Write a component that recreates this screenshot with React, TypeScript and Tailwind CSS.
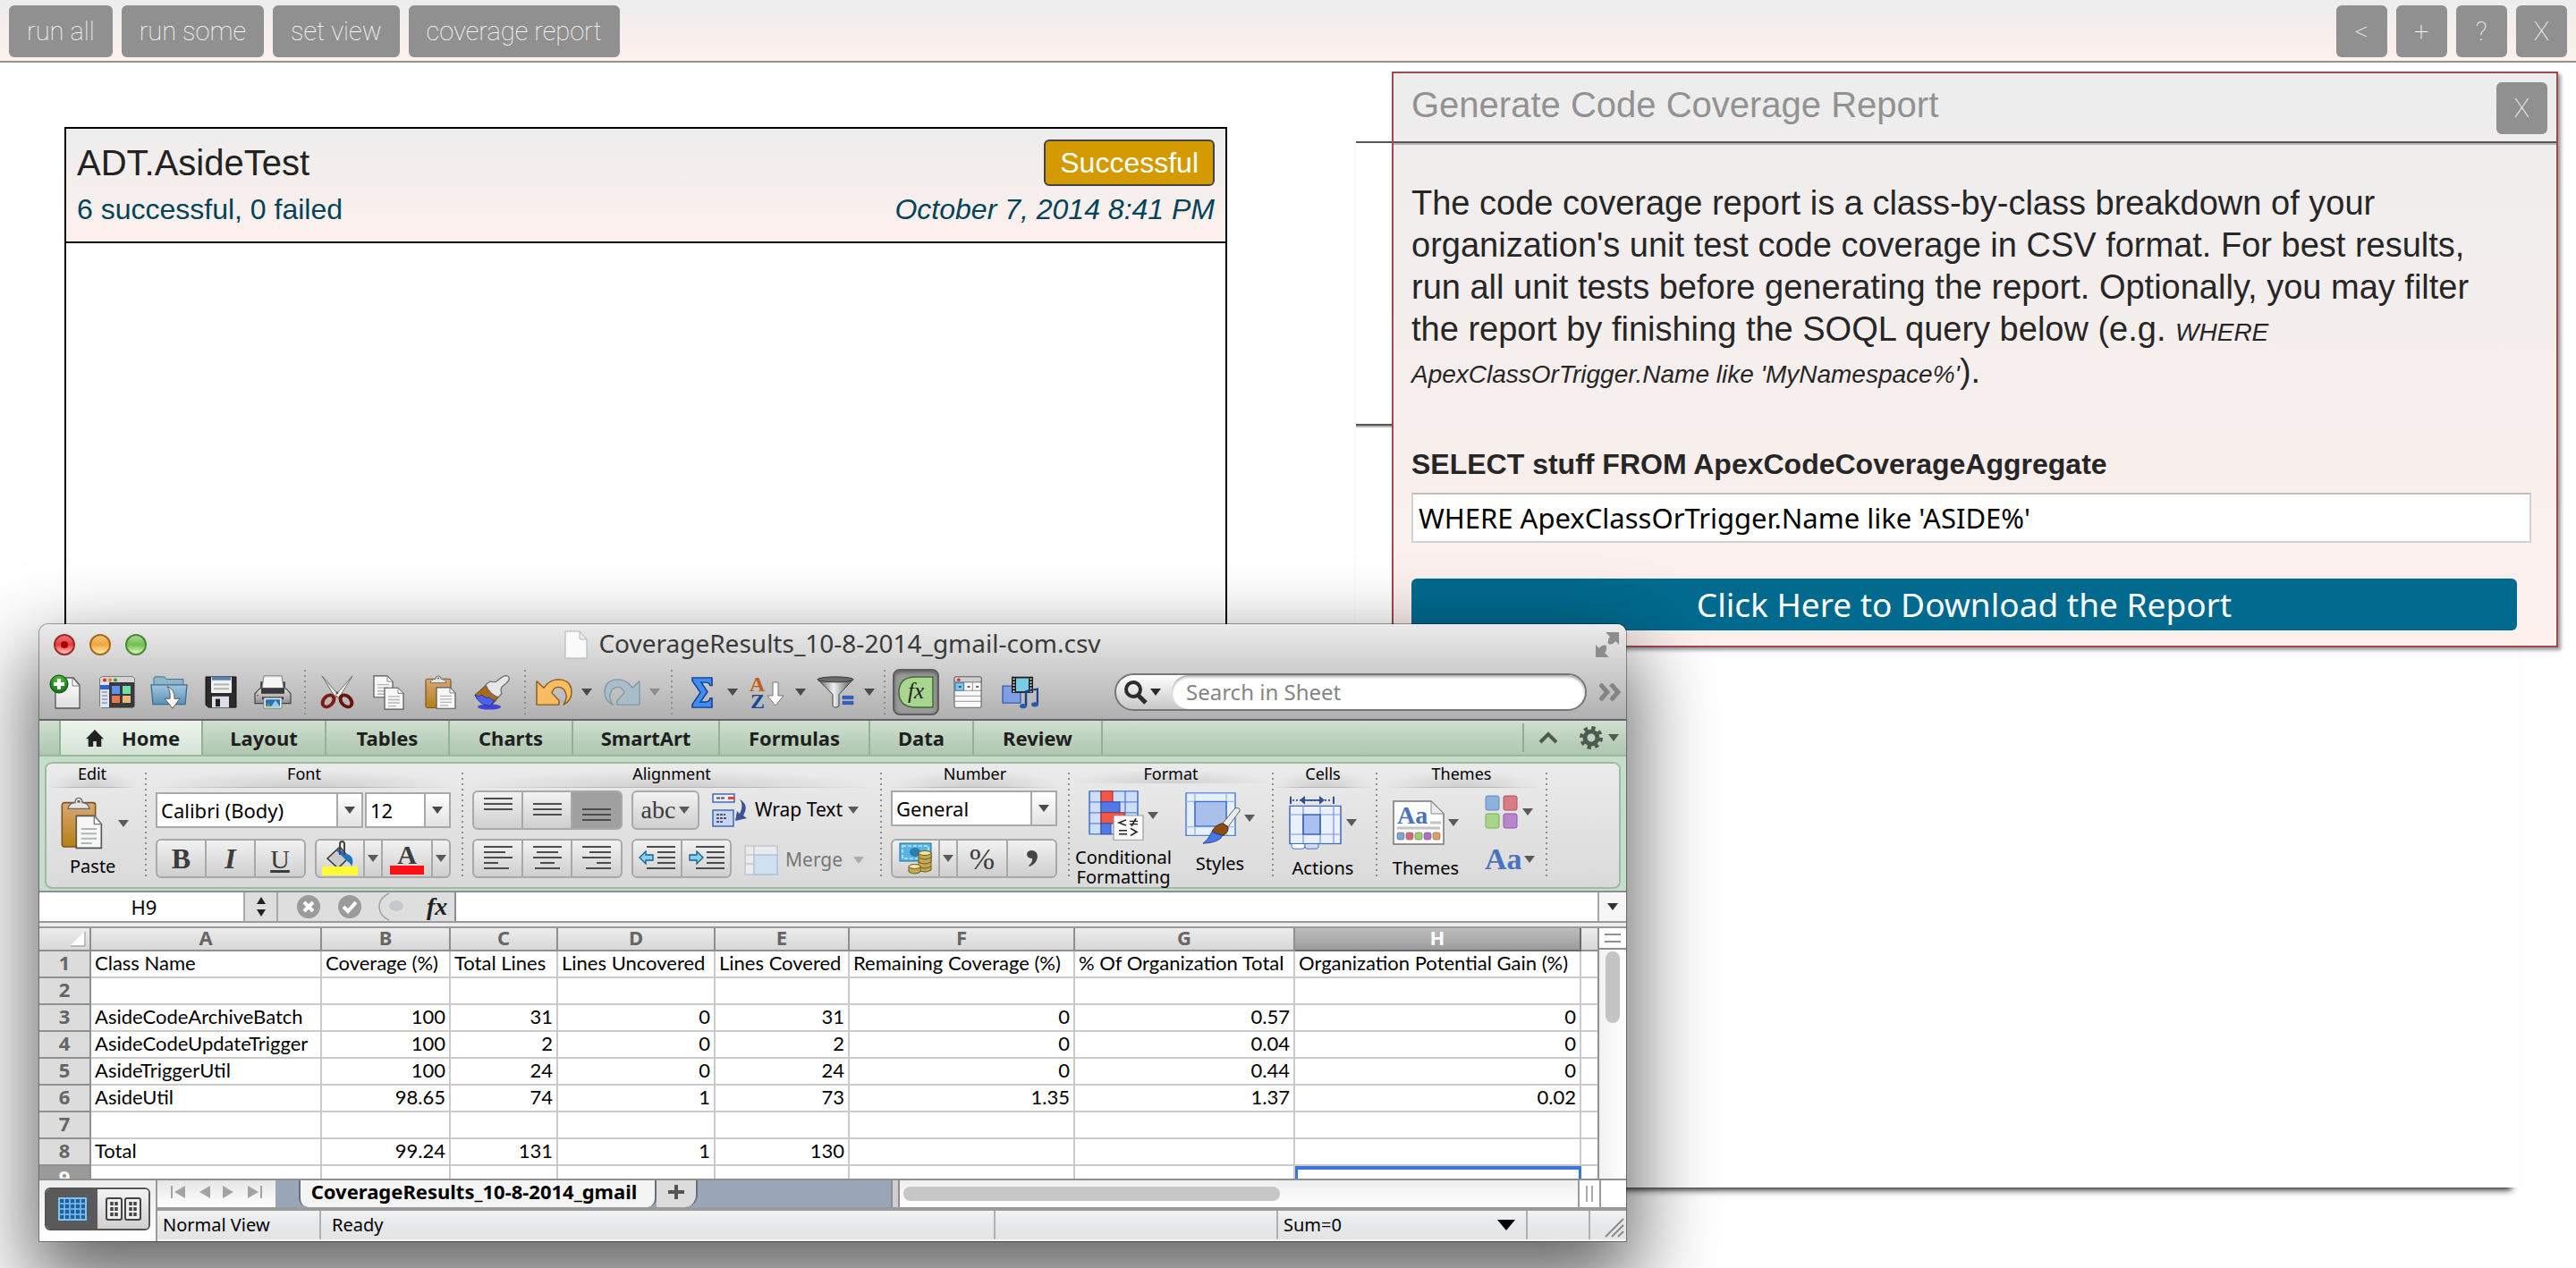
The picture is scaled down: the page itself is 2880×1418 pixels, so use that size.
import React from "react";
import type { ReactNode } from "react";

const ui = "font-['Noto_Sans','Open_Sans',sans-serif]";

/* ---------- small shared pieces ---------- */

function Caret({ className = "text-[#4a4a4a]" }: { className?: string }) {
  return (
    <svg width="12" height="8" viewBox="0 0 12 8" className={`shrink-0 ${className}`} aria-hidden="true">
      <path d="M0 0h12L6 8z" fill="currentColor" />
    </svg>
  );
}

function NavButton({ children, label }: { children: ReactNode; label?: string }) {
  return (
    <button
      type="button"
      aria-label={label}
      className="flex h-[58px] min-w-[57px] items-center justify-center rounded-md bg-[#909090] px-5 font-['Roboto','Inter',sans-serif] text-[29px] leading-[40px] font-thin whitespace-nowrap text-white"
    >
      {children}
    </button>
  );
}

function Tool({ children, label, className }: { children: ReactNode; label: string; className: string }) {
  return (
    <button type="button" aria-label={label} className={`flex h-[52px] shrink-0 items-center justify-center ${className}`}>
      {children}
    </button>
  );
}

function Dots({ className }: { className: string }) {
  return (
    <div className={`flex shrink-0 justify-center ${className}`}>
      <div className="w-[2px] bg-[repeating-linear-gradient(to_bottom,#8f8f8f_0px,#8f8f8f_2px,transparent_2px,transparent_6px)]" />
    </div>
  );
}

/* ---------- toolbar icons ---------- */

function NewDocIcon() {
  return (
    <svg width="36" height="40" viewBox="0 0 36 40" aria-hidden="true">
      <defs>
        <linearGradient id="nd" x1="0" y1="0" x2="0" y2="1"><stop offset="0" stopColor="#fff" /><stop offset="1" stopColor="#dedede" /></linearGradient>
        <radialGradient id="ng" cx=".5" cy=".3" r=".7"><stop offset="0" stopColor="#5cc640" /><stop offset="1" stopColor="#0e6b12" /></radialGradient>
      </defs>
      <path d="M7 4h20l7 8v26H7z" fill="url(#nd)" stroke="#555" strokeWidth="1.300" />
      <path d="M26 4v9h8z" fill="#fff" stroke="#777" strokeWidth="1" />
      <circle cx="11" cy="11" r="10" fill="url(#ng)" stroke="#0a4d0d" />
      <path d="M9 5h4v4h4v4h-4v4H9v-4H5V9h4z" fill="#fff" />
    </svg>
  );
}

function GalleryIcon() {
  return (
    <svg width="40" height="36" viewBox="0 0 40 36" aria-hidden="true">
      <rect x="1" y="1" width="38" height="34" rx="2" fill="#3a3a3c" stroke="#333" />
      <path d="M1 7V3q0-2 2-2h34q2 0 2 2v4z" fill="#d5d5d5" />
      <circle cx="6" cy="4.500" r="2" fill="#d8302b" /><circle cx="12" cy="4.500" r="2" fill="#d98a1c" /><circle cx="18" cy="4.500" r="2" fill="#3d9b2c" />
      <rect x="1" y="7" width="10" height="28" fill="#dfe5f2" />
      <rect x="1" y="10" width="10" height="5" fill="#2f60d8" />
      <path d="M3 18h6M3 22h6M3 26h6M3 30h6" stroke="#a3abbd" strokeWidth="2" />
      <rect x="14" y="11" width="9" height="9" fill="#5b92ee" /><rect x="26" y="11" width="9" height="9" fill="#6fe0ac" />
      <rect x="14" y="22" width="9" height="8" fill="#e8764e" /><rect x="26" y="22" width="9" height="8" fill="#f0b878" />
    </svg>
  );
}

function FolderIcon() {
  return (
    <svg width="42" height="38" viewBox="0 0 42 42" preserveAspectRatio="none" aria-hidden="true">
      <defs>
        <linearGradient id="fo" x1="0" y1="0" x2="0" y2="1"><stop offset="0" stopColor="#a3c6de" /><stop offset="1" stopColor="#5a90b5" /></linearGradient>
      </defs>
      <path d="M4 4q0-2 2-2h9q2 0 3 3h19v10H4z" fill="#8fb5cd" stroke="#44718f" />
      <path d="M1 12h40l-2 24H3z" fill="url(#fo)" stroke="#3d6c8c" strokeWidth="1.300" />
      <path d="M19 14q9 4 8 15h6l-8 12-9-12h6q1-9-3-15z" fill="#f4f4f4" stroke="#555" strokeWidth="1" />
    </svg>
  );
}

function FloppyIcon() {
  return (
    <svg width="38" height="38" viewBox="0 0 38 40" preserveAspectRatio="none" aria-hidden="true">
      <path d="M2 2h34v36H5l-3-3z" fill="#2b2b2d" stroke="#111" />
      <rect x="8" y="2" width="23" height="19" rx="1" fill="#f1f1f1" />
      <rect x="9" y="2" width="21" height="4" fill="#5b7fb2" />
      <path d="M11 11h17M11 16h17" stroke="#b3b3b3" strokeWidth="2" />
      <rect x="9" y="25" width="19" height="13" fill="#dcdfe6" />
      <rect x="13" y="28" width="5" height="9" fill="#222" />
    </svg>
  );
}

function PrinterIcon() {
  return (
    <svg width="42" height="38" viewBox="0 0 42 42" preserveAspectRatio="none" aria-hidden="true">
      <defs>
        <linearGradient id="pr" x1="0" y1="0" x2="0" y2="1"><stop offset="0" stopColor="#e6e6e6" /><stop offset="1" stopColor="#8d8d8d" /></linearGradient>
      </defs>
      <path d="M7 8h28v14H7z" fill="#4a4a4c" />
      <path d="M5 18l4-3h24l4 3 4 5v12H1V23z" fill="url(#pr)" stroke="#444" strokeWidth="1.200" />
      <path d="M11 1h20l2 15H9z" fill="#f5f5f5" stroke="#777" />
      <path d="M8 16h26v7H8z" fill="#39393b" />
      <rect x="9" y="27" width="24" height="3" fill="#2d2d2f" />
      <path d="M11 28h20v13H11z" fill="#fff" stroke="#777" />
      <path d="M13 30h16v9H13z" fill="#2c6fc0" /><path d="M19 39l5-8 5 8z" fill="#8bd0e6" /><path d="M13 39l3-5 3 5z" fill="#57a64a" />
      <circle cx="4" cy="25" r="1" fill="#e33" />
    </svg>
  );
}

function ScissorsIcon() {
  return (
    <svg width="38" height="38" viewBox="0 0 38 42" preserveAspectRatio="none" aria-hidden="true">
      <path d="M2 1l19 24-4 3z" fill="#e9e9e9" stroke="#666" />
      <path d="M36 1L17 25l4 3z" fill="#f5f5f5" stroke="#666" />
      <ellipse cx="9" cy="32" rx="5.500" ry="8" transform="rotate(35 9 32)" fill="none" stroke="#7e1d12" strokeWidth="4" />
      <ellipse cx="29" cy="32" rx="5.500" ry="8" transform="rotate(-35 29 32)" fill="none" stroke="#6a120c" strokeWidth="4" />
      <circle cx="19" cy="22" r="1.500" fill="#555" />
    </svg>
  );
}

function Page({ x, y }: { x: number; y: number }) {
  return (
    <g transform={`translate(${x} ${y})`}>
      <path d="M0 0h15l6 7v20H0z" fill="#f7f7f7" stroke="#555" strokeWidth="1.200" />
      <path d="M15 0v7h6z" fill="#fff" stroke="#777" strokeWidth="1" />
      <path d="M4 11h13M4 15h13M4 19h13M4 23h9" stroke="#b4b4b4" strokeWidth="1.500" />
    </g>
  );
}

function CopyIcon() {
  return (
    <svg width="36" height="39" viewBox="0 0 36 44" preserveAspectRatio="none" aria-hidden="true">
      <Page x={1} y={1} />
      <Page x={13} y={16} />
    </svg>
  );
}

function ClipboardIcon({ big }: { big?: boolean }) {
  return (
    <svg width={big ? 48 : 36} height={big ? 60 : 39} viewBox="0 0 36 45" preserveAspectRatio="none" aria-hidden="true">
      <defs>
        <linearGradient id="cb" x1="0" y1="0" x2="0" y2="1"><stop offset="0" stopColor="#d9a876" /><stop offset="1" stopColor="#b57f14" /></linearGradient>
      </defs>
      <rect x="1" y="5" width="28" height="37" rx="2" fill="url(#cb)" stroke="#7b5723" strokeWidth="1.200" />
      <path d="M6 10q1-5 6-5 0-4 3-4t3 4q5 0 6 5z" fill="#e5e5e5" stroke="#666" />
      <circle cx="15" cy="4" r="1.200" fill="#666" />
      <Page x={13} y={16} />
    </svg>
  );
}

function BrushIcon() {
  return (
    <svg width="42" height="39" viewBox="0 0 42 44" preserveAspectRatio="none" aria-hidden="true">
      <ellipse cx="17" cy="40" rx="13" ry="3.500" fill="#3f45d8" />
      <path d="M14 12q-8 8-13 13 4 11 17 14 6-5 10-13z" fill="#a86b1e" stroke="#5a3a10" />
      <path d="M1 25q5 3 8 0 4 5 8 3 3 4 6 4l-5 7Q5 37 1 25z" fill="#4b62ec" stroke="#26349c" />
      <path d="M13 12l5-4q6 2 8-1l6-5q6-3 7 1t-3 7l-5 5q-2 4 0 8l-4 5q-10-4-14-16z" fill="#e7e7e7" stroke="#666" strokeWidth="1.200" />
    </svg>
  );
}

function UndoIcon({ redo }: { redo?: boolean }) {
  return (
    <svg width="42" height="30" viewBox="0 0 42 32" preserveAspectRatio="none" className={redo ? "-scale-x-100" : ""} aria-hidden="true">
      <path
        d="M1 3l8 8Q15 1 26 1q14 1 14 15 0 10-9 15 4-6 3-12-2-9-9-9-5 0-7 7l8 9v5H1z"
        fill={redo ? "#a9bdc9" : "#f6bd62"}
        stroke={redo ? "#8299a7" : "#8a5a1c"}
        strokeWidth="1.400"
        strokeLinejoin="round"
      />
    </svg>
  );
}

function SigmaIcon() {
  return (
    <svg width="26" height="35" viewBox="0 0 26 40" preserveAspectRatio="none" aria-hidden="true">
      <path d="M2 1h22v10h-2q-1-4-5-4h-5l7 12-8 13h6q4 0 5-5h2v12H2v-4l9-15L2 5z" fill="#3f8df0" stroke="#123c8e" strokeWidth="1.500" />
    </svg>
  );
}

function SortIcon() {
  return (
    <svg width="42" height="38" viewBox="0 0 42 38" aria-hidden="true">
      <text x="1" y="18" fontSize="24" fontWeight="700" fontFamily="Liberation Serif, serif" fill="#c05d16">A</text>
      <text x="2" y="37" fontSize="24" fontWeight="700" fontFamily="Liberation Serif, serif" fill="#1c4996">Z</text>
      <path d="M27 8h6v15h6l-9 11-9-11h6z" fill="#fff" stroke="#777" />
    </svg>
  );
}

function FunnelIcon() {
  return (
    <svg width="42" height="36" viewBox="0 0 42 42" preserveAspectRatio="none" aria-hidden="true">
      <defs>
        <linearGradient id="fu" x1="0" y1="0" x2="1" y2="0"><stop offset="0" stopColor="#555" /><stop offset=".45" stopColor="#eef1f4" /><stop offset="1" stopColor="#4e4e4e" /></linearGradient>
      </defs>
      <path d="M1 4h40L25 24v15q-4 4-7 0V24z" fill="url(#fu)" stroke="#333" />
      <ellipse cx="21" cy="4.500" rx="20" ry="3.500" fill="#6a6a6a" stroke="#333" />
      <path d="M29 26h12v4H29zM29 33h12v4H29z" fill="#2a62c8" stroke="#123c8e" strokeWidth=".5" />
    </svg>
  );
}

function FormulaIcon() {
  return (
    <svg width="40" height="36" viewBox="0 0 40 36" aria-hidden="true">
      <path d="M39 1v34H20Q1 35 1 18T20 1z" fill="#a9d68f" stroke="#3f6b34" strokeWidth="1.500" />
      <text x="11" y="25" fontSize="25" fontStyle="italic" fontFamily="Liberation Serif, serif" fill="#222">fx</text>
    </svg>
  );
}

function FormIcon() {
  return (
    <svg width="33" height="36" viewBox="0 0 34 42" preserveAspectRatio="none" aria-hidden="true">
      <rect x="1" y="1" width="31" height="40" rx="2" fill="#fafafa" stroke="#666" strokeWidth="1.200" />
      <path d="M1 8V3q0-2 2-2h27q2 0 2 2v5z" fill="#cfcfcf" stroke="#666" />
      <circle cx="6" cy="5" r="2" fill="#d8302b" />
      <rect x="2" y="9" width="10" height="10" fill="#7cc8ee" stroke="#2b6f9b" />
      <path d="M1 19h31M1 26h31M1 33h31M22 8v11" stroke="#8b8b8b" />
      <path d="M6 13h3v2H6zM16 13h3v2h-3zM26 13h3v2h-3z" fill="#333" />
    </svg>
  );
}

function MediaIcon() {
  return (
    <svg width="42" height="38" viewBox="0 0 42 44" preserveAspectRatio="none" aria-hidden="true">
      <rect x="2" y="14" width="20" height="22" fill="#7f9ee6" stroke="#2a4fa8" strokeWidth="1.200" />
      <rect x="12" y="2" width="24" height="21" fill="#1b1b1d" />
      <rect x="17" y="4" width="14" height="17" fill="#7ccbe6" />
      <path d="M14.500 4v18M33.500 4v18" stroke="#ddd" strokeWidth="2" strokeDasharray="2 2" />
      <path d="M28 21l13-3v20M28 20v20" fill="none" stroke="#1d4387" strokeWidth="2.500" />
      <ellipse cx="25" cy="40" rx="4" ry="3" fill="#2a5aa8" /><ellipse cx="38" cy="38" rx="4" ry="3" fill="#2a5aa8" />
    </svg>
  );
}

/* ---------- ribbon pieces ---------- */

function Group({ title, className, children }: { title: string; className: string; children: ReactNode }) {
  return (
    <section aria-label={title} className={`flex shrink-0 flex-col ${className}`}>
      <h3 className={`h-[26px] bg-[radial-gradient(ellipse_50%_70%_at_50%_100%,#cfcfcf_0%,transparent_100%)] text-center text-lg leading-[22px] text-black ${ui}`}>
        {title}
      </h3>
      <div className="h-px bg-[linear-gradient(to_right,transparent,#b5b5b5_30%,#b5b5b5_70%,transparent)]" />
      {children}
    </section>
  );
}

function Divider() {
  return <Dots className="my-2.5 w-[2px]" />;
}

function Combo({ label, options, className }: { label: string; options: string[]; className: string }) {
  return (
    <div className={`flex h-10 border-2 border-[#a9a9a9] bg-white ${className}`}>
      <select aria-label={label} className={`min-w-0 flex-1 appearance-none bg-white pl-1 text-[22px] leading-8 text-black ${ui}`}>
        {options.map((o) => (
          <option key={o}>{o}</option>
        ))}
      </select>
      <span className="flex w-7 items-center justify-center border-l-2 border-[#a9a9a9] bg-gradient-to-b from-white to-[#e2e2e2]">
        <Caret />
      </span>
    </div>
  );
}

function Bar({ children }: { children: ReactNode }) {
  return (
    <div className="flex h-11 divide-x-2 divide-[#a9a9a9] overflow-hidden rounded-md border-2 border-[#a9a9a9] bg-gradient-to-b from-[#f2f2f2] to-[#cfcfcf]">
      {children}
    </div>
  );
}

function Seg({ label, className = "w-14", children }: { label: string; className?: string; children: ReactNode }) {
  return (
    <button type="button" aria-label={label} className={`flex items-center justify-center font-['Liberation_Serif',serif] text-[#3c3c3c] ${className}`}>
      {children}
    </button>
  );
}

function Lines({ d, shift = 0 }: { d: [number, number][]; shift?: number }) {
  return (
    <svg width="34" height="32" viewBox="0 0 34 32" aria-hidden="true">
      {d.map(([x, w], i) => (
        <path key={i} d={`M${x} ${3 + shift + i * 6}h${w}`} stroke="#4c4c4c" strokeWidth="2" />
      ))}
    </svg>
  );
}

function Indent({ back }: { back?: boolean }) {
  return (
    <svg width="42" height="32" viewBox="0 0 42 32" aria-hidden="true">
      <path d="M9 3h32M21 9h20M21 15h20M21 21h20M9 27h32" stroke="#4c4c4c" strokeWidth="2" />
      <path
        d={back ? "M1 15l7-7v4h8v6H8v4z" : "M17 15l-7-7v4H2v6h8v4z"}
        fill="#7fd4f6"
        stroke="#1c5d86"
        strokeWidth="1.300"
      />
    </svg>
  );
}

function BigTool({ label, icon, className = "", lines = 1 }: { label: ReactNode; icon: ReactNode; className?: string; lines?: number }) {
  return (
    <button type="button" className={`flex flex-col items-center ${className}`}>
      <span className={`flex items-center justify-center gap-1 self-stretch ${lines === 2 ? "h-[72px]" : "h-[78px]"}`}>
        {icon}
        <Caret className="text-[#5a5a5a]" />
      </span>
      <span className={`text-xl text-black ${ui} ${lines === 2 ? "leading-[22px]" : "leading-6"}`}>{label}</span>
    </button>
  );
}

function CondIcon() {
  return (
    <svg width="62" height="56" viewBox="0 0 62 70" preserveAspectRatio="none" aria-hidden="true">
      <rect x="1" y="1" width="54" height="60" fill="#cfdef8" />
      <path d="M1 16h54M1 31h54M1 46h54M14 1v60M41 1v60" stroke="#5b86d6" strokeWidth="1.500" />
      <rect x="1" y="1" width="54" height="60" fill="none" stroke="#3f6fc8" strokeWidth="1.500" />
      <rect x="14" y="1" width="13" height="15" fill="#f2584a" stroke="#a82418" />
      <rect x="14" y="16" width="21" height="15" fill="#5079e6" stroke="#2a4fa8" />
      <rect x="14" y="31" width="26" height="15" fill="#f2584a" stroke="#a82418" />
      <rect x="14" y="46" width="11" height="15" fill="#5079e6" stroke="#2a4fa8" />
      <rect x="28" y="35" width="33" height="34" fill="#fafafa" stroke="#888" />
      <path d="M42 41l-8 4 8 4M46 43h9M46 47h9M53 39l-5 11M34 56h9M34 61h9M47 53l7 5-7 5" fill="none" stroke="#222" strokeWidth="1.800" />
    </svg>
  );
}

function StylesIcon() {
  return (
    <svg width="62" height="58" viewBox="0 0 62 72" preserveAspectRatio="none" aria-hidden="true">
      <rect x="1" y="1" width="55" height="59" fill="#e7effb" stroke="#4a80d0" strokeWidth="1.500" />
      <path d="M1 13h55M1 48h55M11 1v59M46 1v59" stroke="#9fbbe8" strokeWidth="1.500" />
      <rect x="11" y="13" width="35" height="34" fill="#a9c0ea" stroke="#3f6fc8" strokeWidth="1.500" />
      <path d="M56 22q6-1 5 4L48 48l-6-5z" fill="#ececec" stroke="#555" />
      <path d="M42 43l6 5q1 8-6 12-6-2-12-6 4-9 12-11z" fill="#8a4d14" stroke="#4a2808" />
      <path d="M30 55q6 4 12 5-4 10-22 11 6-5 10-16z" fill="#4a78e8" stroke="#1d3c94" />
    </svg>
  );
}

function CellsIcon() {
  return (
    <svg width="60" height="60" viewBox="0 0 60 74" preserveAspectRatio="none" aria-hidden="true">
      <path d="M2 1v10M50 1v10" stroke="#2f4f8f" strokeWidth="2" />
      <path d="M4 6h44" stroke="#2f4f8f" strokeWidth="2" strokeDasharray="2 2" />
      <path d="M12 6l6-6v5h16V0l6 6-6 6V7H18v5z" fill="#2f4f8f" />
      <rect x="1" y="14" width="57" height="52" fill="#eaf0fc" stroke="#3f66b8" strokeWidth="1.500" />
      <path d="M1 26h57M1 53h57M16 14v52M35 14v52M50 14v52" stroke="#7d9ad6" strokeWidth="1.300" />
      <rect x="16" y="26" width="19" height="27" fill="#a9c0f0" stroke="#2f55a8" strokeWidth="1.500" />
      <path d="M3 66h15v4q0 3-3 3H6q-3 0-3-3z" fill="#fff" stroke="#3f66b8" /><path d="M18 66h15v4q0 3-3 3h-9q-3 0-3-3z" fill="#cfdaf4" stroke="#3f66b8" />
    </svg>
  );
}

const swatches = ["#7aa6d8", "#d36a72", "#9ccf74", "#b06cc4", "#dfa062"];

function ThemesIcon() {
  return (
    <svg width="58" height="50" viewBox="0 0 58 50" aria-hidden="true">
      <path d="M1 1h42l14 14v34H1z" fill="#fdfdfd" stroke="#777" strokeWidth="1.500" />
      <path d="M43 1v14h14z" fill="#ececec" stroke="#888" />
      <text x="5" y="26" fontSize="28" fontWeight="700" fontFamily="Liberation Serif, serif" fill="#4a72be">Aa</text>
      <path d="M42 25h12M5 31h48" stroke="#c4c4c4" strokeWidth="3" />
      {swatches.map((c, i) => (
        <rect key={c} x={5 + i * 10} y="36" width="8" height="8" rx="2" fill={c} stroke="#666" strokeWidth=".6" />
      ))}
    </svg>
  );
}

/* ---------- spreadsheet data ---------- */

const cols = ["A", "B", "C", "D", "E", "F", "G", "H"];
const rows: string[][] = [
  ["Class Name", "Coverage (%)", "Total Lines", "Lines Uncovered", "Lines Covered", "Remaining Coverage (%)", "% Of Organization Total", "Organization Potential Gain (%)"],
  ["", "", "", "", "", "", "", ""],
  ["AsideCodeArchiveBatch", "100", "31", "0", "31", "0", "0.57", "0"],
  ["AsideCodeUpdateTrigger", "100", "2", "0", "2", "0", "0.04", "0"],
  ["AsideTriggerUtil", "100", "24", "0", "24", "0", "0.44", "0"],
  ["AsideUtil", "98.65", "74", "1", "73", "1.35", "1.37", "0.02"],
  ["", "", "", "", "", "", "", ""],
  ["Total", "99.24", "131", "1", "130", "", "", ""],
  ["", "", "", "", "", "", "", ""],
];

function Sheet() {
  return (
    <div className="flex h-[282px] border-b-2 border-[#8f8f8f] bg-white">
      <div className="min-w-0 flex-1 overflow-hidden border-r-2 border-[#8f8f8f]">
        <table className="w-full table-fixed border-separate border-spacing-0 text-black">
          <colgroup>
            <col className="w-[58px]" /><col className="w-[258px]" /><col className="w-[144px]" /><col className="w-[120px]" />
            <col className="w-[176px]" /><col className="w-[150px]" /><col className="w-[252px]" /><col className="w-[246px]" />
            <col className="w-[320px]" /><col />
          </colgroup>
          <thead>
            <tr className="h-[26px] bg-gradient-to-b from-[#ececec] to-[#d6d6d6]">
              <th aria-label="Select all" className="border-r-2 border-b-2 border-[#8f8f8f] p-0">
                <svg width="18" height="18" viewBox="0 0 18 18" className="mr-1 ml-auto" aria-hidden="true"><path d="M16 1v15H1z" fill="#fff" /><path d="M17 1v16H1" fill="none" stroke="#999" /></svg>
              </th>
              {cols.map((c) => (
                <th
                  key={c}
                  scope="col"
                  className={`border-r-2 border-b-2 px-0 pt-0 pb-1 text-[22px] leading-5 font-bold ${ui} ${
                    c === "H" ? "border-[#6a6a6a] bg-gradient-to-b from-[#bdbdbd] to-[#9c9c9c] text-white" : "border-[#8f8f8f] text-[#666]"
                  }`}
                >
                  {c}
                </th>
              ))}
              <th aria-label="Next column" className="border-b-2 border-[#8f8f8f] p-0" />
            </tr>
          </thead>
          <tbody>
            {rows.map((r, i) => (
              <tr key={i} className="h-[30px]">
                <th
                  scope="row"
                  className={`border-r-2 border-b-2 border-[#8f8f8f] px-0 pt-0 pb-1 text-[22px] leading-6 font-bold ${ui} ${i === 8 ? "bg-[#9a9a9a] text-white" : "bg-[#dcdcdc] text-[#666]"}`}
                >
                  {i + 1}
                </th>
                {r.map((v, j) => (
                  <td
                    key={j}
                    className={`px-1 pt-0 pb-0.5 font-['Lato',sans-serif] text-[22px] leading-[26px] whitespace-nowrap ${
                      i === 8 && j === 7 ? "border-x-[3px] border-t-4 border-[#3b76d6]" : "border-r-2 border-b-2 border-[#cbcbcb]"
                    } ${i > 0 && j > 0 ? "text-right" : "text-left"}`}
                  >
                    {v}
                  </td>
                ))}
                <td className="border-b-2 border-[#cbcbcb] p-0" />
              </tr>
            ))}
          </tbody>
        </table>
      </div>
      <div className="flex w-[30px] flex-col items-center bg-gradient-to-r from-[#f1f1f1] to-white">
        <div className="flex h-6 w-full flex-col items-center justify-center gap-1.5 border-b-2 border-[#8f8f8f] bg-white">
          <div className="h-[2px] w-[18px] bg-[#8f8f8f]" />
          <div className="h-[2px] w-[18px] bg-[#8f8f8f]" />
        </div>
        <div className="mt-0.5 h-20 w-4 rounded-full bg-[#c4c4c4]" />
      </div>
    </div>
  );
}

function Light({ className, dot }: { className: string; dot?: boolean }) {
  return (
    <span className={`flex h-6 w-6 items-center justify-center rounded-full border-2 ${className}`}>
      {dot && <span className="h-2 w-2 rounded-full bg-[#a8000a]" />}
    </span>
  );
}

const tabs: [string, string][] = [
  ["Layout", "w-[138px]"],
  ["Tables", "w-[138px]"],
  ["Charts", "w-[138px]"],
  ["SmartArt", "w-[164px]"],
  ["Formulas", "w-[168px]"],
  ["Data", "w-[116px]"],
  ["Review", "w-[144px]"],
];

function ExcelWindow() {
  return (
    <div className="absolute top-[698px] left-[44px] w-[1774px] overflow-hidden rounded-t-[10px] bg-[#ececec] shadow-[0_0_0_1px_rgba(0,0,0,0.35),0_40px_90px_10px_rgba(0,0,0,0.6)]">
      {/* title bar and toolbar */}
      <div className="h-[108px] border-b-2 border-[#666] bg-gradient-to-b from-[#ebebeb] to-[#b0b0b0]">
        <div className="flex h-[46px] items-center justify-between">
          <div className="flex w-[200px] gap-4 pl-4">
            <Light dot className="border-[#9c2a2a] bg-gradient-to-b from-[#f0736f] via-[#e8383a] to-[#ffc2c0]" />
            <Light className="border-[#a8691f] bg-gradient-to-b from-[#f5c27a] via-[#f0a63c] to-[#fff0a8]" />
            <Light className="border-[#4c8a35] bg-gradient-to-b from-[#a9d890] via-[#72bf52] to-[#d9fabf]" />
          </div>
          <div className="flex items-center gap-3">
            <svg width="26" height="32" viewBox="0 0 26 32" aria-hidden="true">
              <path d="M1 1h16l8 9v21H1z" fill="#fafafa" stroke="#b0b0b0" /><path d="M17 1v9h8z" fill="#eee" stroke="#b8b8b8" />
            </svg>
            <h2 className={`pb-1 text-[28px] leading-9 text-[#3a3a3a] ${ui}`}>CoverageResults_10-8-2014_gmail-com.csv</h2>
          </div>
          <div className="flex w-[200px] justify-end pr-2">
            <button type="button" aria-label="Full screen">
              <svg width="26" height="28" viewBox="0 0 26 28" aria-hidden="true">
                <path d="M11 0h15v14l-4-4q-3 5-8 3-1-5 2-8zM0 14l4 4q3-5 8-3 1 5-2 8l5 5H0z" fill="#8d8d8d" />
              </svg>
            </button>
          </div>
        </div>
        <div className="flex h-[56px] items-center pt-1">
          <Tool label="New" className="w-[58px]"><NewDocIcon /></Tool>
          <Tool label="Templates" className="w-[58px]"><GalleryIcon /></Tool>
          <Tool label="Open" className="w-[58px]"><FolderIcon /></Tool>
          <Tool label="Save" className="w-[58px]"><FloppyIcon /></Tool>
          <Tool label="Print" className="w-[58px]"><PrinterIcon /></Tool>
          <Dots className="h-[50px] w-3.5" />
          <Tool label="Cut" className="w-[58px]"><ScissorsIcon /></Tool>
          <Tool label="Copy" className="w-[58px]"><CopyIcon /></Tool>
          <Tool label="Paste from clipboard" className="w-[58px]"><ClipboardIcon /></Tool>
          <Tool label="Format painter" className="w-[58px]"><BrushIcon /></Tool>
          <Dots className="h-[50px] w-3.5" />
          <Tool label="Undo" className="w-[52px]"><UndoIcon /></Tool>
          <Tool label="Undo list" className="w-5"><Caret /></Tool>
          <Tool label="Redo" className="w-[58px]"><UndoIcon redo /></Tool>
          <Tool label="Redo list" className="w-4"><Caret className="text-[#8c8c8c]" /></Tool>
          <Dots className="h-[50px] w-[22px]" />
          <Tool label="Sum" className="w-[46px]"><SigmaIcon /></Tool>
          <Tool label="Sum list" className="w-[22px]"><Caret /></Tool>
          <Tool label="Sort" className="w-14"><SortIcon /></Tool>
          <Tool label="Sort list" className="w-[18px]"><Caret /></Tool>
          <Tool label="Filter" className="w-[60px]"><FunnelIcon /></Tool>
          <Tool label="Filter list" className="w-4"><Caret /></Tool>
          <Dots className="h-[50px] w-[18px]" />
          <Tool label="Formula builder" className="w-[52px] rounded-lg border-2 border-[#5f5f5f] bg-[#9a9a9a] shadow-[inset_0_2px_4px_rgba(0,0,0,0.4)]"><FormulaIcon /></Tool>
          <Tool label="Toolbox" className="w-16"><FormIcon /></Tool>
          <Tool label="Media" className="w-[52px]"><MediaIcon /></Tool>
          <div className="ml-20 flex h-[42px] flex-1 overflow-hidden rounded-full border-2 border-[#777] bg-gradient-to-b from-white to-[#c8c8c8]">
            <button type="button" aria-label="Search options" className="flex w-[62px] items-center gap-0.5 pl-2">
              <svg width="28" height="28" viewBox="0 0 28 28" aria-hidden="true">
                <circle cx="11" cy="11" r="8" fill="none" stroke="#2c2c2c" strokeWidth="4" /><path d="M16 17l9 9" stroke="#2c2c2c" strokeWidth="5" />
              </svg>
              <Caret className="text-[#2c2c2c]" />
            </button>
            <input
              type="search"
              aria-label="Search in Sheet"
              placeholder="Search in Sheet"
              className={`min-w-0 flex-1 rounded-full bg-white pl-4 text-2xl text-black shadow-[inset_0_2px_3px_rgba(0,0,0,0.35)] placeholder:text-[#858585] ${ui}`}
            />
          </div>
          <button type="button" aria-label="More tools" className="flex w-11 justify-center pl-2.5">
            <svg width="26" height="20" viewBox="0 0 26 20" aria-hidden="true">
              <path d="M1 1l8 9-8 9M13 1l8 9-8 9" fill="none" stroke="#848484" strokeWidth="5" />
            </svg>
          </button>
        </div>
      </div>

      {/* ribbon tabs */}
      <div className={`flex h-10 items-stretch border-b-2 border-[#9cb6a0] bg-gradient-to-b from-[#d0dfcf] to-[#aec6b0] text-[22px] font-bold text-[#1f1f1f] ${ui}`}>
        <div className="w-6 border-r-2 border-[#8fb395]" />
        <button type="button" className="flex w-[159px] items-center gap-5 border-r-2 border-[#8fb395] bg-gradient-to-b from-[#eef4ee] to-[#d3e3d4] pl-7">
          <svg width="20" height="19" viewBox="0 0 22 22" preserveAspectRatio="none" aria-hidden="true"><path d="M11 0l11 12h-3v10h-6v-7H9v7H3V12H0z" fill="#222" /></svg>
          Home
        </button>
        {tabs.map(([t, w]) => (
          <button key={t} type="button" className={`border-r-2 border-[#8fb395] text-center ${w}`}>
            {t}
          </button>
        ))}
        <div className="ml-auto flex items-center">
          <div className="h-8 border-l-2 border-[#93ac95]" />
          <button type="button" aria-label="Collapse ribbon" className="px-4">
            <svg width="22" height="14" viewBox="0 0 22 14" aria-hidden="true"><path d="M2 12l9-9 9 9" fill="none" stroke="#4b5b4d" strokeWidth="4" /></svg>
          </button>
          <button type="button" aria-label="Ribbon options" className="flex items-center gap-1.5 pr-2 pl-2">
            <svg width="26" height="26" viewBox="0 0 26 26" aria-hidden="true">
              <circle cx="13" cy="13" r="7" fill="none" stroke="#4b5b4d" strokeWidth="5" />
              <circle cx="13" cy="13" r="11" fill="none" stroke="#4b5b4d" strokeWidth="4" strokeDasharray="4.300 4.340" />
            </svg>
            <Caret className="text-[#4b5b4d]" />
          </button>
        </div>
      </div>

      {/* ribbon */}
      <div className="h-[152px] border-b-2 border-[#8f8f8f] bg-[#c3dfc9] px-1.5 pt-1.5 pb-1">
        <div className="flex h-[142px] rounded-lg border-2 border-[#a3b9a6] bg-gradient-to-b from-[#ebebeb] to-[#dadada]">
          <Group title="Edit" className="w-[110px] pr-2">
            <button type="button" className="flex flex-col items-start pt-2.5">
              <span className="flex items-center gap-4 pl-4"><ClipboardIcon big /><Caret className="text-[#5a5a5a]" /></span>
              <span className={`pt-1.5 pl-[26px] text-xl leading-6 text-black ${ui}`}>Paste</span>
            </button>
          </Group>
          <Divider />
          <Group title="Font" className="w-[352px] px-2.5">
            <div className="flex gap-0.5 pt-[5px]">
              <Combo label="Font family" options={["Calibri (Body)", "Cambria"]} className="w-[232px]" />
              <Combo label="Font size" options={["12", "14"]} className="w-24" />
            </div>
            <div className="flex gap-2.5 pt-3">
              <Bar>
                <Seg label="Bold" className="w-[55px] text-[32px] font-bold">B</Seg>
                <Seg label="Italic" className="w-[55px] text-[32px] font-bold italic">I</Seg>
                <Seg label="Underline" className="w-[54px] text-[30px] underline">U</Seg>
              </Bar>
              <Bar>
                <Seg label="Fill color" className="w-[54px]">
                  <svg width="42" height="40" viewBox="0 0 42 40" aria-hidden="true">
                    <path d="M7 20L21 7l10 12-12 12z" fill="#c9c9c9" stroke="#333" strokeWidth="1.500" />
                    <path d="M17 11l12 12q4 2 5 6 5-12-8-15l-6-5z" fill="#1c74c4" />
                    <path d="M21 16V4q0-3 2.500-3T26 4v12" fill="none" stroke="#444" strokeWidth="2" />
                    <rect x="1" y="29" width="40" height="10" fill="#fffb34" />
                  </svg>
                </Seg>
                <Seg label="Fill color list" className="w-5"><Caret className="text-[#5a5a5a]" /></Seg>
                <Seg label="Font color" className="w-14 flex-col">
                  <span className="h-[26px] text-[30px] leading-[28px] font-bold">A</span>
                  <span className="h-[10px] w-[38px] bg-[#fd0f16]" />
                </Seg>
                <Seg label="Font color list" className="w-[18px]"><Caret className="text-[#5a5a5a]" /></Seg>
              </Bar>
            </div>
          </Group>
          <Divider />
          <Group title="Alignment" className="w-[466px] px-2.5">
            <div className="flex items-center gap-2.5 pt-[3px]">
              <Bar>
                <Seg label="Align top" className="w-[55px]"><Lines d={[[1, 32], [1, 32], [1, 32]]} /></Seg>
                <Seg label="Align middle" className="w-[55px]"><Lines shift={6} d={[[1, 32], [1, 32], [1, 32]]} /></Seg>
                <Seg label="Align bottom" className="w-[54px] bg-[#a0a0a0]"><Lines shift={12} d={[[1, 32], [1, 32], [1, 32]]} /></Seg>
              </Bar>
              <Bar>
                <Seg label="Orientation" className="w-[72px] gap-1 text-[28px] leading-9">abc<Caret className="text-[#5a5a5a]" /></Seg>
              </Bar>
              <button type="button" className={`ml-1 flex items-center gap-1.5 text-[21px] text-black ${ui}`}>
                <svg width="42" height="38" viewBox="0 0 42 38" aria-hidden="true">
                  <rect x="1" y="1" width="24" height="9" fill="#e5ecfb" stroke="#4468ae" strokeWidth="1.500" />
                  <path d="M5 5.500h10" stroke="#555" strokeWidth="2" strokeDasharray="4 1" /><path d="M18 5.500h7" stroke="#ef4030" strokeWidth="3" />
                  <rect x="1" y="19" width="23" height="18" fill="#c6d5f4" stroke="#4468ae" strokeWidth="1.500" />
                  <path d="M5 24h10M5 28h12M5 32h8" stroke="#555" strokeWidth="2" strokeDasharray="3 1" />
                  <path d="M31 7q11 6 4 18l4 3-13 3 2-11 3 3q5-10 0-16z" fill="#3c5298" />
                </svg>
                Wrap Text
                <Caret className="text-[#5a5a5a]" />
              </button>
            </div>
            <div className="flex items-center gap-2.5 pt-2.5">
              <Bar>
                <Seg label="Align left" className="w-[55px]"><Lines d={[[1, 32], [1, 24], [1, 32], [1, 16], [1, 28]]} /></Seg>
                <Seg label="Align center" className="w-[55px]"><Lines d={[[1, 32], [5, 24], [1, 32], [9, 16], [3, 28]]} /></Seg>
                <Seg label="Align right" className="w-[54px]"><Lines d={[[1, 32], [9, 24], [1, 32], [17, 16], [5, 28]]} /></Seg>
              </Bar>
              <Bar>
                <Seg label="Decrease indent" className="w-[55px]"><Indent back /></Seg>
                <Seg label="Increase indent" className="w-[53px]"><Indent /></Seg>
              </Bar>
              <button type="button" className={`ml-1 flex items-center gap-2 pt-1 text-[21px] text-[#777] ${ui}`}>
                <svg width="38" height="34" viewBox="0 0 38 34" aria-hidden="true">
                  <rect x="1" y="1" width="36" height="32" fill="#ebebeb" stroke="#c4c8cc" strokeWidth="1.500" />
                  <rect x="11" y="11" width="26" height="22" fill="#cfe0ee" stroke="#a9c6dc" strokeWidth="1.500" />
                  <path d="M11 1v10H1M1 21h10" stroke="#c4c8cc" strokeWidth="1.500" fill="none" />
                </svg>
                Merge
                <Caret className="ml-1 text-[#adadad]" />
              </button>
            </div>
          </Group>
          <Divider />
          <Group title="Number" className="w-[208px] px-2.5">
            <div className="pt-[3px]">
              <Combo label="Number format" options={["General", "Number"]} className="w-[186px]" />
            </div>
            <div className="flex pt-3.5">
              <Bar>
                <Seg label="Currency" className="w-[53px]">
                  <svg width="38" height="36" viewBox="0 0 38 36" aria-hidden="true">
                    <rect x="1" y="1" width="35" height="20" fill="#58b4e4" stroke="#1d6d9c" />
                    <rect x="4" y="4" width="29" height="14" fill="none" stroke="#c6e8f8" strokeWidth="1.500" strokeDasharray="4 2" />
                    <ellipse cx="18" cy="11" rx="6" ry="5" fill="#2b7fb0" />
                    <path d="M22 12v19q7 4 14 0V12z" fill="#c3a955" stroke="#6f5c1c" /><path d="M22 17q7 4 14 0M22 22q7 4 14 0M22 27q7 4 14 0" fill="none" stroke="#6f5c1c" />
                    <ellipse cx="29" cy="12" rx="7" ry="2.500" fill="#f1e4a4" stroke="#6f5c1c" />
                    <path d="M11 27v6q7 4 13 0v-6z" fill="#c3a955" stroke="#6f5c1c" /><ellipse cx="17.500" cy="27" rx="6.500" ry="2.500" fill="#f1e4a4" stroke="#6f5c1c" />
                  </svg>
                </Seg>
                <Seg label="Currency list" className="w-5"><Caret className="text-[#5a5a5a]" /></Seg>
                <Seg label="Percent" className="w-14 text-[34px]">%</Seg>
                <Seg label="Comma" className="w-[53px]">
                  <svg width="14" height="20" viewBox="0 0 14 20" aria-hidden="true"><path d="M7 1q6 1 6 7-1 8-9 11l-1-1q5-4 4-8-5 0-6-4 0-5 6-5z" fill="#444" /></svg>
                </Seg>
              </Bar>
            </div>
          </Group>
          <Divider />
          <Group title="Format" className="w-[226px]">
            <div className="flex pl-1">
              <BigTool className="w-[112px] shrink-0" lines={2} label={<>Conditional<br />Formatting</>} icon={<CondIcon />} />
              <BigTool className="w-[104px]" label="Styles" icon={<StylesIcon />} />
            </div>
          </Group>
          <Divider />
          <Group title="Cells" className="w-[114px] pr-1">
            <BigTool label="Actions" icon={<CellsIcon />} />
          </Group>
          <Divider />
          <Group title="Themes" className="w-[188px] px-2">
            <div className="flex gap-5">
              <BigTool className="w-[92px]" label="Themes" icon={<ThemesIcon />} />
              <div className="flex flex-col gap-4 pt-2">
                <button type="button" aria-label="Theme colors" className="flex items-center gap-1">
                  <svg width="38" height="38" viewBox="0 0 38 38" aria-hidden="true">
                    <rect x="1" y="1" width="15" height="16" rx="2" fill="#8db2da" stroke="#5f8cc0" /><rect x="21" y="1" width="15" height="16" rx="2" fill="#d67e84" stroke="#b84c54" />
                    <rect x="1" y="21" width="15" height="16" rx="2" fill="#a9d58a" stroke="#78b050" /><rect x="21" y="21" width="15" height="16" rx="2" fill="#b986cc" stroke="#9054a8" />
                  </svg>
                  <Caret className="text-[#5a5a5a]" />
                </button>
                <button type="button" aria-label="Theme fonts" className="flex items-center gap-0.5 font-['Liberation_Serif',serif] text-[34px] leading-9 font-bold text-[#4a72be]">
                  Aa
                  <Caret className="text-[#5a5a5a]" />
                </button>
              </div>
            </div>
          </Group>
          <Divider />
        </div>
      </div>

      {/* formula bar */}
      <div className="flex h-[34px] border-b-2 border-[#9a9a9a] bg-[#dedede]">
        <input aria-label="Cell reference" defaultValue="H9" className={`w-[230px] border-r-2 border-[#a9a9a9] bg-white pl-1.5 text-center text-[22px] text-black ${ui}`} />
        <button type="button" aria-label="Step cell" className="flex w-[37px] items-center justify-center border-r-2 border-[#a9a9a9]">
          <svg width="10" height="22" viewBox="0 0 10 22" aria-hidden="true"><path d="M5 0l5 8H0zM5 22l5-8H0z" fill="#222" /></svg>
        </button>
        <div className="flex w-[199px] items-center border-r-2 border-[#8f8f8f] pl-5">
          <button type="button" aria-label="Cancel entry">
            <svg width="28" height="28" viewBox="0 0 28 28" aria-hidden="true"><circle cx="14" cy="14" r="13" fill="#9b9b9b" /><path d="M9 9l10 10M19 9L9 19" stroke="#fff" strokeWidth="4" /></svg>
          </button>
          <button type="button" aria-label="Accept entry" className="ml-[18px]">
            <svg width="28" height="28" viewBox="0 0 28 28" aria-hidden="true"><circle cx="14" cy="14" r="13" fill="#9b9b9b" /><path d="M7 14l5 5 9-10" fill="none" stroke="#fff" strokeWidth="4" /></svg>
          </button>
          <svg width="30" height="32" viewBox="0 0 30 32" className="ml-[18px]" aria-hidden="true">
            <path d="M12 1Q1 6 1 16t11 15" fill="none" stroke="#a3a3a3" strokeWidth="1.500" /><ellipse cx="20" cy="15" rx="8" ry="6" fill="#c5c8cf" />
          </svg>
          <button type="button" aria-label="Insert function" className="ml-6 font-['Liberation_Serif',serif] text-[28px] leading-8 font-bold text-[#222] italic">fx</button>
        </div>
        <input aria-label="Formula" defaultValue="" className="min-w-0 flex-1 bg-white" />
        <button type="button" aria-label="Expand formula bar" className="flex w-8 items-center justify-center border-l-2 border-[#a9a9a9] bg-[#f6f6f6]"><Caret className="text-[#333]" /></button>
      </div>
      <div className="h-1.5 border-b-2 border-[#9a9a9a] bg-[#ececec]" />

      <Sheet />

      {/* sheet tabs and status bar */}
      <div className="flex h-[68px]">
        <div className="flex w-[132px] justify-center border-r-2 border-[#9a9a9a] bg-gradient-to-b from-[#ececec] to-white pt-2">
          <div className="flex h-12 w-[118px] overflow-hidden rounded-md border-2 border-[#555]">
            <button type="button" aria-label="Normal view" className="flex w-[57px] items-center justify-center bg-[#5a5a5a]">
              <svg width="32" height="26" viewBox="0 0 32 26" aria-hidden="true">
                <rect x="1" y="1" width="30" height="24" fill="#1f5f9f" stroke="#7fc4f0" strokeWidth="2" />
                <path d="M1 7h30M1 13h30M1 19h30M7 1v24M13 1v24M19 1v24M25 1v24" stroke="#7fc4f0" strokeWidth="1.500" />
              </svg>
            </button>
            <button type="button" aria-label="Page layout view" className="flex flex-1 items-center justify-center bg-gradient-to-b from-[#f4f4f4] to-[#cfcfcf]">
              <svg width="42" height="26" viewBox="0 0 42 26" aria-hidden="true">
                <rect x="2" y="1" width="17" height="24" rx="2" fill="#eee" stroke="#444" strokeWidth="2" /><rect x="23" y="1" width="17" height="24" rx="2" fill="#eee" stroke="#444" strokeWidth="2" />
                <path d="M8 5v17M13 5v17M29 5v17M34 5v17" stroke="#444" strokeWidth="3.500" strokeDasharray="4 2" />
              </svg>
            </button>
          </div>
        </div>
        <div className="flex min-w-0 flex-1 flex-col">
          <div className="flex h-[34px] border-b-4 border-[#9a9a9a] bg-[#98a6b8]">
            <div className="flex w-[132px] items-center justify-evenly bg-gradient-to-b from-[#e6e6e6] to-white pb-1 text-[#a3a3a3]">
              <button type="button" aria-label="First sheet"><svg width="18" height="14" viewBox="0 0 18 14" aria-hidden="true"><path d="M1 0h2v14H1zM17 0v14L5 7z" fill="currentColor" /></svg></button>
              <button type="button" aria-label="Previous sheet"><svg width="12" height="14" viewBox="0 0 12 14" aria-hidden="true"><path d="M12 0v14L0 7z" fill="currentColor" /></svg></button>
              <button type="button" aria-label="Next sheet"><svg width="12" height="14" viewBox="0 0 12 14" aria-hidden="true"><path d="M0 0v14l12-7z" fill="currentColor" /></svg></button>
              <button type="button" aria-label="Last sheet"><svg width="18" height="14" viewBox="0 0 18 14" aria-hidden="true"><path d="M17 0h-2v14h2zM1 0v14l12-7z" fill="currentColor" /></svg></button>
            </div>
            <button type="button" className={`ml-[26px] w-[400px] rounded-b-[10px] border-x-2 border-[#66707c] bg-[#f4f4f4] pr-2 pb-1.5 text-center text-[22px] leading-6 font-bold whitespace-nowrap text-black ${ui}`}>
              CoverageResults_10-8-2014_gmail
            </button>
            <button type="button" aria-label="Add sheet" className="flex w-[46px] items-center justify-center rounded-br-[14px] border-r-2 border-[#66707c] bg-[#dcdcdc] pb-1">
              <svg width="18" height="16" viewBox="0 0 18 16" aria-hidden="true"><path d="M7 0h4v6h7v4h-7v6H7v-6H0V6h7z" fill="#555" /></svg>
            </button>
            <div className="ml-auto w-2.5 border-x-2 border-[#8f8f8f] bg-[#cfcfcf]" />
            <div className="flex w-[758px] items-center bg-gradient-to-b from-[#eee] to-white pl-1">
              <div className="h-4 w-[421px] rounded-full bg-[#c6c6c6]" />
            </div>
            <div className="flex w-6 items-center justify-center gap-1 border-l-2 border-[#9a9a9a] bg-white">
              <div className="h-[18px] w-[2px] bg-[#aaa]" /><div className="h-[18px] w-[2px] bg-[#aaa]" />
            </div>
            <div className="w-[30px] border-l-2 border-[#9a9a9a] bg-white" />
          </div>
          <div className={`flex h-[34px] divide-x-2 divide-[#b0b0b0] border-b-2 border-[#f6f6f6] bg-gradient-to-b from-[#f1f2f3] via-[#e6e8ea] to-[#e2e4e6] text-xl leading-8 text-black ${ui}`}>
            <div className="w-[183px] pl-1.5">Normal View</div>
            <div className="flex-1 pl-3">Ready</div>
            <div className="w-[316px]" />
            <div className="flex w-[279px] items-center justify-between pr-3 pl-1.5">
              <select aria-label="Status calculation" className="flex-1 appearance-none"><option>Sum=0</option></select>
              <svg width="20" height="12" viewBox="0 0 20 12" aria-hidden="true"><path d="M0 0h20L10 12z" fill="#000" /></svg>
            </div>
            <div className="w-[70px]" />
            <div className="flex w-[40px] items-end justify-end pr-0.5 pb-0.5">
              <svg width="22" height="22" viewBox="0 0 22 22" aria-hidden="true"><path d="M1 21L21 1M8 21L21 8M15 21l6-6" stroke="#8a8a8a" strokeWidth="2" /></svg>
            </div>
          </div>
        </div>
      </div>
    </div>
  );
}

function ReportPanel() {
  return (
    <section
      aria-labelledby="report-title"
      className="absolute top-20 right-5 left-[1556px] border-2 border-[#9b4a4d] bg-gradient-to-b from-[#ededed] to-[#fdf0ed] pb-[17px] shadow-[3px_3px_4px_rgba(0,0,0,0.4)]"
    >
      <header className="flex h-[78px] items-start justify-between border-b-2 border-[#555] pt-2.5 pr-2.5 pl-5 shadow-[0_2px_0_#b5b5b5]">
        <h2 id="report-title" className="pt-0.5 text-[40px] leading-[46px] text-[#929292]">Generate Code Coverage Report</h2>
        <NavButton label="Close report panel">X</NavButton>
      </header>
      <form className="flex flex-col px-5 pt-11" onSubmit={(e) => e.preventDefault()}>
        <p className="mr-7 text-[38px] leading-[47px] text-[#262626]">
          The code coverage report is a class-by-class breakdown of your organization's unit test code coverage in CSV format. For best results, run all unit
          tests before generating the report. Optionally, you may filter the report by finishing the SOQL query below (e.g.{" "}
          <em className="text-[28px] leading-[28px]">WHERE ApexClassOrTrigger.Name like 'MyNamespace%'</em>).
        </p>
        <label htmlFor="query" className="pt-[60px] text-[32px] leading-10 font-bold text-[#262626]">
          SELECT stuff FROM ApexCodeCoverageAggregate
        </label>
        <input
          id="query"
          defaultValue="WHERE ApexClassOrTrigger.Name like 'ASIDE%'"
          className={`mt-3 mr-2 h-14 border-2 border-[#d2d2d2] border-t-[#bdbdbd] bg-white px-1.5 text-[31px] text-black ${ui}`}
        />
        <button type="submit" className={`mt-10 mr-6 h-[58px] rounded-md bg-[#006a8e] text-center text-[37px] leading-[58px] text-white ${ui}`}>
          Click Here to Download the Report
        </button>
      </form>
    </section>
  );
}

export default function App() {
  return (
    <div className="relative flex h-screen flex-col overflow-hidden bg-white font-['Liberation_Sans',Arial,sans-serif]">
      <nav className="flex h-[70px] justify-between border-b-2 border-[#929292] bg-gradient-to-b from-[#ededed] to-[#fdf0ed] px-2.5 pt-1.5">
        <div className="flex gap-2.5">
          <NavButton>run all</NavButton>
          <NavButton>run some</NavButton>
          <NavButton>set view</NavButton>
          <NavButton>coverage report</NavButton>
        </div>
        <div className="flex gap-2.5">
          <NavButton>&lt;</NavButton>
          <NavButton>+</NavButton>
          <NavButton>?</NavButton>
          <NavButton>X</NavButton>
        </div>
      </nav>
      <main className="grid flex-1 grid-cols-2 gap-36 pt-[72px] pr-16 pb-[90px] pl-[72px]">
        <article className="border-2 border-black">
          <header className="h-32 border-b-2 border-black bg-gradient-to-b from-[#ededed] to-[#fdf0ed] px-3 pt-3">
            <div className="flex items-center justify-between">
              <h1 className="text-[40px] leading-[52px] text-[#222]">ADT.AsideTest</h1>
              <span className="h-[52px] rounded-md border-2 border-[#444] bg-[#d39b00] px-4 text-[32px] leading-[48px] text-white">Successful</span>
            </div>
            <div className="flex justify-between pt-1.5 text-[32px] leading-10 text-[#00435a]">
              <p>6 successful, 0 failed</p>
              <p className="italic">October 7, 2014 8:41 PM</p>
            </div>
          </header>
        </article>
        <article className="pt-4 shadow-[0_10px_8px_-8px_#000]">
          <div className="h-[318px] border-y-2 border-[#555] shadow-[0_2px_0_#b5b5b5]" />
        </article>
      </main>
      <ReportPanel />
      <ExcelWindow />
    </div>
  );
}
